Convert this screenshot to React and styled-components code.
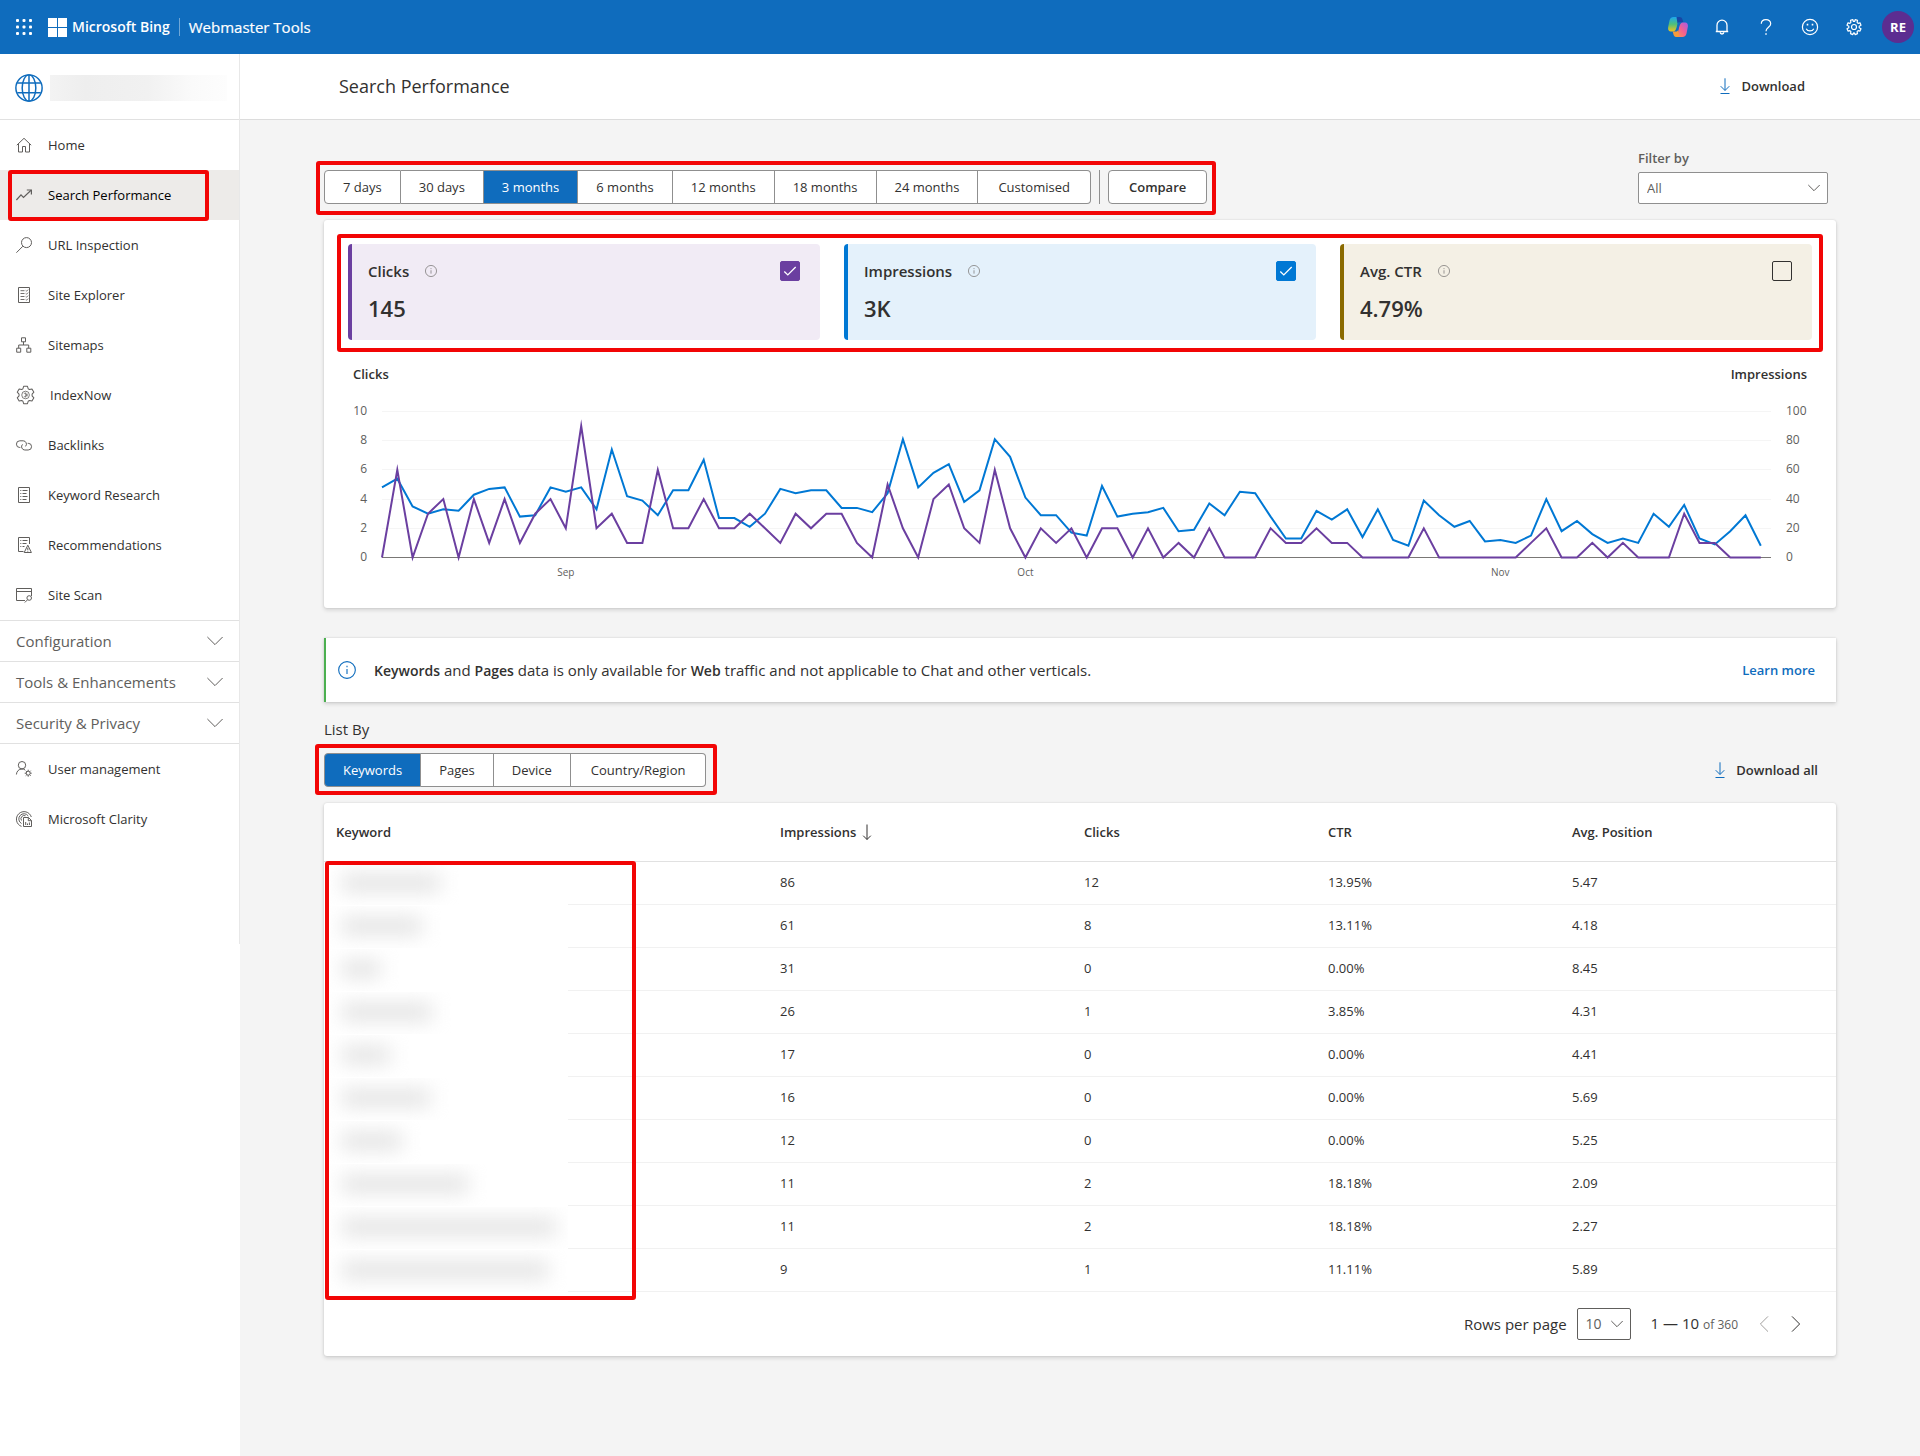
import React, { useState } from "react";
import styled, { createGlobalStyle, css } from "styled-components";

const color = {
  brand: "#0f6cbd",
  text: "#323130",
  muted: "#605e5c",
  line: "#e1e1e1",
  page: "#f4f4f4",
  border: "#8f8f8f",
  mark: "#f20505",
  clicks: "#6b3fa0",
  impressions: "#0078d4",
  ctr: "#8a6a00",
};

const GlobalStyle = createGlobalStyle`
  *, *::before, *::after { box-sizing: border-box; }
  body {
    margin: 0;
    background: ${color.page};
    color: ${color.text};
    font-family: "Open Sans", "Noto Sans", sans-serif;
    font-size: 13px;
    line-height: 20px;
  }
  button, select, input { font: inherit; color: inherit; margin: 0; }
  button { cursor: pointer; }
  a { color: inherit; text-decoration: none; }
  h1, h2, p { margin: 0; font-weight: 400; }
  svg { display: block; flex: none; }
`;

/* ---------- icons ---------- */

const Icon = styled.svg.attrs((p) => ({
  viewBox: p.viewBox || "0 0 16 16",
  fill: "none",
  stroke: "currentColor",
  "aria-hidden": true,
}))`
  width: ${(p) => p.$size || 16}px;
  height: ${(p) => p.$size || 16}px;
  overflow: visible;
`;

const icons = {
  home: (
    <path d="M.8 8.2 8 1.3l7.2 6.9M2.5 7v8H6.500V9.500h3V15h4V7" />
  ),
  trend: (
    <>
      <path strokeWidth="1.2" d="M.4 13 5 7.800l2.500 2.700L15 3.200" />
      <path strokeWidth="1.2" d="M10.800 3h4.600v4.400" />
    </>
  ),
  inspect: (
    <>
      <circle cx="10.500" cy="5.600" r="5" />
      <path d="M6.900 9.200.4 15.700" />
    </>
  ),
  explorer: (
    <>
      <path d="M2.500.5h11v15h-11z" />
      <path d="M4.500 3.700h4M4.500 6.500h4M4.500 9.500h4M4.500 12.500h4M9.700 3.400l.8.800 1.600-1.600M9.700 6.400l.8.800 1.600-1.600M9.700 9.400l.8.800 1.600-1.600M9.700 12.400l.8.800 1.600-1.600" strokeWidth=".9" />
    </>
  ),
  sitemap: (
    <path d="M5.500.8h4v4h-4zM.7 11.200h4v4h-4zM10.800 11.200h4v4h-4zM7.500 4.800V8M2.700 11.200V8h10v3.200" />
  ),
  indexnow: (
    <>
      <path d="M6.800.3h3.400l.7 2.200 1 .6 2.300-.5 1.700 2.900-1.600 1.700v1.600l1.600 1.700-1.700 2.900-2.300-.5-1 .6-.7 2.200H6.800l-.7-2.200-1-.6-2.300.5-1.700-2.900 1.600-1.700V7.200L1.100 5.500l1.700-2.900 2.300.5 1-.6z" strokeWidth=".9" strokeLinejoin="round" />
      <circle cx="8.500" cy="8" r="3.400" strokeWidth=".7" />
      <path d="M7 6.500h1.500c1.200 0 1.200 3 0 3H7M8.600 5.800v4.400M10 6.800v2.400" strokeWidth=".6" />
    </>
  ),
  link: (
    <>
      <path d="M4.300 10.500H3.800a3.300 3.300 0 0 1 0-6.700h3.400a3.300 3.300 0 0 1 2.300 5.600" />
      <path d="M11.700 6.300h.5a3.300 3.300 0 0 1 0 6.700H8.800a3.300 3.300 0 0 1-2.300-5.600" />
    </>
  ),
  keyword: (
    <>
      <path d="M2.500.5h11v15h-11z" />
      <path d="M4.300 3.500h1M4.300 6.500h1M4.300 9.500h1M4.300 12.500h1M6.500 3.500h5M6.500 6.500h4M6.500 9.500h5M6.500 12.500h4" />
    </>
  ),
  recommend: (
    <>
      <path d="M13.500 7V.5h-11v14h5" />
      <path d="M4.300 3.500h1M4.300 6.500h1M4.300 9.500h1M6.500 3.500h5M6.500 6.500h4M6.500 9.500h2M11.800 8.200l3.600 7.300H8.200zM11.800 10.800v2.200M11.800 13.700v.9" />
    </>
  ),
  scan: (
    <>
      <path d="M9 13.500H.5v-12h15V9M.5 4.500h15" />
      <circle cx="13.200" cy="11" r="2.300" />
      <path d="m11.500 12.800-2.700 2.700" />
    </>
  ),
  user: (
    <>
      <circle cx="6" cy="4.200" r="3.700" />
      <path d="M.4 13.500C.6 10.300 2.800 8 6 8c1.200 0 2.200.3 3 .9" />
      <circle cx="12.200" cy="12.200" r="2" />
      <path d="M12.200 8.700v1.500M12.200 14.200v1.500M8.700 12.200h1.500M14.200 12.200h1.500M9.700 9.700l1.100 1.100M13.600 13.600l1.100 1.100M14.700 9.700l-1.100 1.100M10.800 13.600l-1.100 1.100" />
    </>
  ),
  clarity: (
    <>
      <path d="M15.300 6A7.600 7.600 0 1 0 5.500 15.400" />
      <path d="M12.300 5A5.200 5.200 0 1 0 5.500 12.500M9.500 4.800A3.200 3.200 0 0 0 5.500 9.500" />
      <path d="M7.500 6.500h5l3 3v6h-8zM12.300 6.500v3.200h3.200M9.700 11v3M11.500 12.500V14M13.400 11.500V14" />
    </>
  ),
  download: <path d="M8 .3v12M3.700 8.200 8 12.500l4.300-4.300M3.500 15.500h9" />,
  info: (
    <>
      <circle cx="8" cy="8" r="7.400" />
      <path d="M8 7v4.500M8 4.200v1.300" />
    </>
  ),
  down: <path d="m.4 4 7.600 7.600L15.600 4" />,
  left: <path d="M12 .4 4.400 8l7.600 7.600" />,
  right: <path d="M4 .4 11.600 8 4 15.600" />,
  sort: <path d="M8 .5v15M4.200 11.700 8 15.500l3.800-3.800" />,
  check: <path d="m1.500 8.500 4 4 9-9" strokeWidth="1.500" />,
  bell: (
    <>
      <path d="M1.800 12.500h12.400M3 12.500V6.200a5 5 0 0 1 10 0v6.300" strokeWidth="1.300" />
      <path d="M6.200 13.200a1.800 1.800 0 0 0 3.600 0" strokeWidth="1.300" />
    </>
  ),
  help: (
    <>
      <path d="M3.300 4.700C3.300 2.300 5.200.6 8 .6s4.700 1.700 4.700 4.100c0 3.300-4.700 3.800-4.700 7.500" strokeWidth="1.200" />
      <path d="M8 14.300v1.500" strokeWidth="1.500" />
    </>
  ),
  smile: (
    <>
      <circle cx="8" cy="8" r="7.600" strokeWidth="1.200" />
      <path d="M4.200 9.700c1.500 2.900 6.100 2.900 7.600 0" strokeWidth="1.200" />
      <path d="M4.700 5.700h1.600M9.700 5.700h1.600" strokeWidth="1.700" />
    </>
  ),
  gear: (
    <>
      <path d="m6.800.5.5 1.900h1.400L9.200.5l2.300.9-.4 1.900 1 1 1.900-.5 1 2.400-1.800 1v1.500l1.800 1-1 2.400-1.900-.4-1 1 .4 1.900-2.300 1-1-1.800H7.700l-.9 1.800-2.300-1 .4-1.900-1-1-1.900.4-1-2.400 1.800-1V7.200l-1.800-1 1-2.400 1.900.5 1-1-.4-1.900z" strokeWidth="1.200" strokeLinejoin="round" />
      <circle cx="8" cy="8" r="2.500" strokeWidth="1.200" />
    </>
  ),
  globe: (
    <g strokeWidth=".85">
      <circle cx="8" cy="8" r="7.500" />
      <ellipse cx="8" cy="8" rx="3.900" ry="7.500" />
      <path d="M8 .5v15M1.300 5.200h13.400M1.300 10.700h13.400" />
    </g>
  ),
};

const Glyph = ({ name, size }) => <Icon $size={size}>{icons[name]}</Icon>;

const Waffle = () => (
  <svg width="16" height="16" viewBox="0 0 16 16" fill="#fff" aria-hidden="true">
    {[0, 6.500, 13].flatMap((y) =>
      [0, 6.500, 13].map((x) => <rect key={`${x}-${y}`} x={x} y={y} width="3" height="3" rx="1" />)
    )}
  </svg>
);

const WindowsLogo = () => (
  <svg width="19" height="19" viewBox="0 0 19 19" fill="#fff" aria-hidden="true">
    <path d="M0 0h9v9H0zM10 0h9v9h-9zM0 10h9v9H0zM10 10h9v9h-9z" />
  </svg>
);

const CopilotLogo = () => (
  <svg width="20" height="20" viewBox="0 0 20 20" aria-hidden="true">
    <defs>
      <linearGradient id="cpA" x1="0" y1="0" x2="0" y2="1">
        <stop offset="0" stopColor="#1ba6f0" />
        <stop offset=".5" stopColor="#4fc07a" />
        <stop offset="1" stopColor="#f2c21a" />
      </linearGradient>
      <linearGradient id="cpB" x1="1" y1="0" x2="0" y2="1">
        <stop offset="0" stopColor="#a35bea" />
        <stop offset=".5" stopColor="#f4608e" />
        <stop offset="1" stopColor="#ff9a4d" />
      </linearGradient>
    </defs>
    <path d="M5.500 0H13c-2.300.5-2.700 3-3.300 5.500-.9 3.500-1.200 9-4.500 9H2.800C.5 14.500-.3 12.500.2 10l1.300-6.500C2 1.200 3.300 0 5.500 0z" fill="url(#cpA)" />
    <path d="M8.500 0h3.300c1.700 0 2.200 1 2.700 2.500l.8 2.700h-4.200c-.8 0-1.300.5-1.600 1.300z" fill="#1747a6" />
    <path d="M14.500 20H7c2.300-.5 2.700-3 3.300-5.500.9-3.500 1.200-9 4.500-9h2.400c2.300 0 3.100 2 2.600 4.500l-1.300 6.500c-.5 2.300-1.800 3.500-4 3.500z" fill="url(#cpB)" />
    <path d="M11.500 20H8.200c-1.700 0-2.200-1-2.700-2.500l-.8-3h3.200c1.400 0 1.900-.6 2.300-1.500z" fill="#f59a3c" />
  </svg>
);

/* ---------- red marker frame laid over a group ---------- */

const Marked = styled.div`
  position: relative;
  display: flex;
  align-items: center;
  gap: ${(p) => p.$gap || 0}px;
  &::after {
    content: "";
    position: absolute;
    inset: ${(p) => p.$inset};
    border: 4px solid ${color.mark};
    border-radius: 3px;
    pointer-events: none;
  }
`;

/* ---------- top bar ---------- */

const TopBar = styled.header`
  display: flex;
  align-items: center;
  justify-content: space-between;
  height: 54px;
  padding-left: 16px;
  background: ${color.brand};
  color: #fff;
`;
const Brand = styled.div`
  display: flex;
  align-items: center;
  font-weight: 500;
  font-size: 15px;
`;
const BarButton = styled.button`
  display: grid;
  place-items: center;
  width: ${(p) => p.$width || 44}px;
  height: 44px;
  padding: 0;
  border: 0;
  background: none;
`;
const Product = styled.a`
  display: flex;
  align-items: center;
  gap: 5px;
  margin-left: 16px;
  font-size: 14px;
  font-weight: 600;
`;
const Service = styled.a`
  margin-left: 9px;
  padding-left: 9px;
  border-left: 1px solid #6fa7d7;
  line-height: 18px;
  -webkit-text-stroke: 0.2px currentColor;
`;
const Tools = styled.div`
  display: flex;
  align-items: center;
`;
const Avatar = styled.span`
  display: grid;
  place-items: center;
  width: 32px;
  height: 32px;
  border-radius: 50%;
  background: #5c2d91;
  font-size: 13px;
  font-weight: 700;
`;

/* ---------- shell ---------- */

const Shell = styled.div`
  display: flex;
  min-height: calc(100vh - 54px);
`;
const Sidebar = styled.aside`
  flex: none;
  width: 240px;
  background: #fff;
`;
const SideInner = styled.div`
  padding-bottom: 100px;
  border-right: 1px solid #e8e8e8;
`;
const Site = styled.div`
  display: flex;
  align-items: center;
  gap: 7px;
  height: 66px;
  padding: 2px 12px 0 15px;
  border-bottom: 1px solid ${color.line};
  color: ${color.brand};
`;
const SiteName = styled.div`
  flex: 1;
  height: 26px;
  background: linear-gradient(90deg, #f3f3f3, #eeeeee 20%, #f1f1f1 55%, #fafafa 80%, #fdfdfd);
`;
const NavItem = styled.a`
  position: relative;
  display: flex;
  align-items: center;
  gap: 16px;
  height: 50px;
  padding-left: 16px;
  color: ${color.text};
  svg { color: ${color.muted}; }
  ${(p) =>
    p.$active &&
    css`
      background: #edebe9;
      color: #000;
      &::after {
        content: "";
        position: absolute;
        inset: 0 30px -1px 8px;
        border: 4px solid ${color.mark};
        border-radius: 3px;
      }
    `}
`;
const Groups = styled.div`
  border-bottom: 1px solid ${color.line};
`;
const Group = styled.button`
  display: flex;
  align-items: center;
  justify-content: space-between;
  width: 100%;
  height: 41px;
  padding: 0 16px;
  border: 0;
  border-top: 1px solid ${color.line};
  background: none;
  color: ${color.muted};
  font-size: 15px;
`;

const Main = styled.main`
  flex: 1;
  min-width: 0;
`;
const PageHead = styled.div`
  display: flex;
  align-items: center;
  justify-content: space-between;
  height: 66px;
  padding: 0 115px 2px 99px;
  border-bottom: 1px solid #dcdcdc;
  background: #fff;
`;
const Title = styled.h1`
  font-size: 18px;
  line-height: 24px;
`;
const TextButton = styled.button`
  display: flex;
  align-items: center;
  gap: 8px;
  padding: 0;
  border: 0;
  background: none;
  font-weight: 600;
  svg { color: ${color.brand}; }
`;
const Content = styled.div`
  padding: 28px 84px 100px;
`;
const Row = styled.div`
  display: flex;
  align-items: ${(p) => p.$align || "flex-end"};
  justify-content: space-between;
  padding-right: ${(p) => p.$end || 0}px;
  margin-bottom: 16px;
`;

/* ---------- segmented buttons ---------- */

const Segments = styled.div`
  display: flex;
`;
const Segment = styled.button`
  height: 34px;
  padding: 0 ${(p) => (p.$last ? 20 : 18)}px;
  border: 1px solid ${color.border};
  border-left-width: ${(p) => (p.$first ? 1 : 0)}px;
  border-radius: ${(p) => (p.$first ? "4px 0 0 4px" : p.$last ? "0 4px 4px 0" : 0)};
  background: ${(p) => (p.$on ? color.brand : "#fff")};
  color: ${(p) => (p.$on ? "#fff" : color.text)};
  white-space: nowrap;
`;
const Rule = styled.span`
  width: 1px;
  height: 34px;
  background: ${color.border};
`;
const Compare = styled.button`
  height: 34px;
  padding: 0 20px;
  border: 1px solid ${color.border};
  border-radius: 4px;
  background: #fff;
  font-weight: 600;
`;

function SegmentGroup({ options, value, onChange, label }) {
  return (
    <Segments role="group" aria-label={label}>
      {options.map((o, i) => (
        <Segment
          key={o}
          type="button"
          $first={i === 0}
          $last={i === options.length - 1}
          $on={o === value}
          aria-pressed={o === value}
          onClick={() => onChange(o)}
        >
          {o}
        </Segment>
      ))}
    </Segments>
  );
}

/* ---------- select ---------- */

const Filter = styled.div`
  display: flex;
  flex-direction: column;
  gap: 4px;
  width: 190px;
`;
const FilterLabel = styled.label`
  color: ${color.muted};
  font-weight: 600;
`;
const SelectBox = styled.div`
  display: grid;
  align-items: center;
  width: ${(p) => p.$width};
  color: ${color.muted};
  > * { grid-area: 1 / 1; }
  svg {
    justify-self: end;
    margin-right: 8px;
    pointer-events: none;
  }
  path { vector-effect: non-scaling-stroke; }
`;
const Select = styled.select`
  appearance: none;
  width: 100%;
  height: 32px;
  padding: 0 8px;
  border: 1px solid ${(p) => (p.$strong ? color.muted : color.border)};
  border-radius: 2px;
  background: #fff;
`;

/* ---------- cards ---------- */

const Card = styled.section`
  border-radius: 3px;
  background: #fff;
  box-shadow: 0 2px 4px rgba(0, 0, 0, 0.14), 0 0 2px rgba(0, 0, 0, 0.13);
`;
const ChartCard = styled(Card)`
  padding: 24px;
`;
const Metric = styled.div`
  display: flex;
  flex: 1;
  justify-content: space-between;
  height: 96px;
  padding: 15px 20px 15px 16px;
  border-left: 4px solid ${(p) => p.$accent};
  border-radius: 4px;
  background: ${(p) => p.$tint};
`;
const MetricName = styled.label`
  display: flex;
  align-items: center;
  gap: 16px;
  font-size: 15px;
  line-height: 24px;
  font-weight: 600;
  svg { color: #797775; }
`;
const MetricValue = styled.p`
  margin-top: 9px;
  font-size: 22px;
  line-height: 32px;
  font-weight: 600;
`;
const CheckBox = styled.span`
  display: grid;
  place-items: center;
  height: 20px;
  margin-top: 2px;
  color: #fff;
  > * { grid-area: 1 / 1; }
  svg { pointer-events: none; }
`;
const CheckInput = styled.input`
  appearance: none;
  width: 20px;
  height: 20px;
  border: 1px solid ${color.text};
  border-radius: 2px;
  &:checked {
    border-color: ${(p) => p.$accent};
    background: ${(p) => p.$accent};
  }
`;
const AxisTitles = styled.div`
  display: flex;
  justify-content: space-between;
  margin: 24px 5px 6px;
  font-weight: 600;
`;
const Plot = styled.svg`
  width: 100%;
  height: auto;
  font-size: 12px;
  text { fill: ${color.muted}; }
`;

const clicks = [
  0, 6, 0, 3, 4, 0, 4, 1, 4, 1, 3, 4, 2, 9, 2, 3, 1, 1, 6, 2, 2, 4, 2, 2, 3, 2, 1, 3, 2, 3, 3, 1, 0, 5, 2, 0, 4, 5, 2, 1,
  6, 2, 0, 2, 1, 2, 0, 2, 2, 0, 2, 0, 1, 0, 2, 0, 0, 0, 2, 1, 1, 2, 1, 1, 0, 0, 0, 0, 2, 0, 0, 0, 0, 0, 0, 1, 2, 0, 0, 1,
  0, 1, 0, 0, 0, 3, 1, 1, 0, 0, 0,
];
const impressions = [
  48, 54, 35, 30, 33, 32, 43, 47, 48, 28, 29, 48, 45, 48, 33, 74, 42, 39, 29, 46, 46, 67, 27, 27, 21, 30, 47, 44, 46, 46,
  34, 34, 31, 44, 81, 48, 58, 64, 38, 46, 81, 69, 41, 29, 29, 17, 15, 49, 28, 30, 31, 34, 18, 19, 37, 29, 45, 44, 28, 13,
  13, 32, 26, 33, 14, 33, 12, 8, 39, 29, 21, 25, 11, 12, 10, 15, 40, 18, 25, 16, 10, 13, 10, 30, 21, 36, 13, 9, 18, 29, 8,
];
const plot = { left: 34, right: 1423, top: 21.500, base: 167.500, step: 15.320 };
const px = (i) => plot.left + i * plot.step;
const py = (ratio) => plot.base - ratio * (plot.base - plot.top);
const trace = (values, max) => values.map((v, i) => `${px(i).toFixed(1)},${py(v / max).toFixed(1)}`).join(" ");

function Chart({ shown }) {
  return (
    <Plot viewBox="0 0 1464 194" role="img" aria-label="Clicks and impressions over the last 3 months">
      {[0, 2, 4, 6, 8, 10].map((t) => (
        <g key={t}>
          {t > 0 && <path d={`M${plot.left} ${Math.floor(py(t / 10)) + 0.5}H${plot.right}`} stroke="#f5f5f5" />}
          <text x="19" y={py(t / 10) + 3.500} textAnchor="end">{t}</text>
          <text x="1438" y={py(t / 10) + 3.500}>{t * 10}</text>
        </g>
      ))}
      {[["Sep", 12], ["Oct", 42], ["Nov", 73]].map(([m, i]) => (
        <text key={m} x={px(i)} y="186" textAnchor="middle" fontSize="10">{m}</text>
      ))}
      <path d={`M${plot.left} ${plot.base}H${plot.right}`} stroke="#797775" />
      {shown.Impressions && (
        <polyline points={trace(impressions, 100)} fill="none" stroke={color.impressions} strokeWidth="2" strokeMiterlimit="20" />
      )}
      {shown.Clicks && (
        <polyline points={trace(clicks, 10)} fill="none" stroke={color.clicks} strokeWidth="2" strokeMiterlimit="20" />
      )}
    </Plot>
  );
}

/* ---------- notice ---------- */

const Notice = styled.div`
  display: flex;
  align-items: center;
  height: 64px;
  margin: 30px 0 17px;
  padding: 0 21px 0 12px;
  border-left: 2px solid #4caf50;
  background: #fff;
  box-shadow: 0 2px 4px rgba(0, 0, 0, 0.14), 0 0 2px rgba(0, 0, 0, 0.13);
  > svg { color: ${color.brand}; }
`;
const NoticeText = styled.p`
  flex: 1;
  margin-left: 18px;
  font-size: 15px;
  strong { font-size: 14px; font-weight: 600; }
`;
const Learn = styled.a`
  color: ${color.brand};
  font-weight: 600;
`;
const ListBy = styled.h2`
  margin-bottom: 14px;
  font-size: 15px;
  line-height: 20px;
`;

/* ---------- table ---------- */

const TableFrame = styled.div`
  position: relative;
  &::after {
    content: "";
    position: absolute;
    inset: 58px auto -8px 1px;
    width: 311px;
    border: 4px solid ${color.mark};
    border-radius: 3px;
    pointer-events: none;
  }
`;
const Table = styled.table`
  width: 100%;
  table-layout: fixed;
  border-collapse: separate;
  border-spacing: 0;
`;
const Col = styled.col`
  width: ${(p) => p.$width};
`;
const Th = styled.th`
  height: 59px;
  padding: 0 12px;
  border-bottom: 1px solid ${color.line};
  text-align: left;
  font-weight: 600;
`;
const SortLabel = styled.span`
  display: flex;
  align-items: center;
  gap: 3px;
`;
const Td = styled.td`
  height: 43px;
  padding: 0 12px 2px;
  border-bottom: 1px solid #f1f1f1;
`;
const HiddenCell = styled.td`
  height: 43px;
  padding: 0 6px;
  background: linear-gradient(90deg, #fff 244px, #f1f1f1 244px) bottom / 100% 1px no-repeat;
`;
const HiddenClip = styled.div`
  display: flex;
  align-items: center;
  width: 238px;
  height: 42px;
  padding-bottom: 2px;
  overflow: hidden;
`;
const HiddenText = styled.div`
  width: ${(p) => p.$width}px;
  height: 16px;
  margin-left: 12px;
  background: #e0e0e0;
  filter: blur(10px);
`;
const Pager = styled.div`
  display: flex;
  align-items: center;
  justify-content: flex-end;
  height: 64px;
  padding-right: 32px;
  font-size: 15px;
`;
const PagerLabel = styled.label`
  margin-right: 10px;
`;
const PagerSelect = styled(Select)`
  font-size: 14px;
`;
const Range = styled.span`
  margin: 0 18px 0 20px;
  small { font-size: 12px; color: ${color.muted}; }
`;
const PageButton = styled.button`
  display: grid;
  place-items: center;
  width: 16px;
  height: 32px;
  margin-left: ${(p) => (p.$next ? 16 : 0)}px;
  padding: 0;
  border: 0;
  background: none;
  color: ${(p) => (p.disabled ? "#a19f9d" : color.text)};
`;

const nav = [
  ["Home", "home"],
  ["Search Performance", "trend"],
  ["URL Inspection", "inspect"],
  ["Site Explorer", "explorer"],
  ["Sitemaps", "sitemap"],
  ["IndexNow", "indexnow", 18],
  ["Backlinks", "link"],
  ["Keyword Research", "keyword"],
  ["Recommendations", "recommend"],
  ["Site Scan", "scan"],
];
const lowerNav = [
  ["User management", "user"],
  ["Microsoft Clarity", "clarity"],
];
const groups = ["Configuration", "Tools & Enhancements", "Security & Privacy"];
const periods = ["7 days", "30 days", "3 months", "6 months", "12 months", "18 months", "24 months", "Customised"];
const lists = ["Keywords", "Pages", "Device", "Country/Region"];
const metrics = [
  { name: "Clicks", value: "145", accent: color.clicks, tint: "#f1ebf5" },
  { name: "Impressions", value: "3K", accent: color.impressions, tint: "#e4f1fb" },
  { name: "Avg. CTR", value: "4.79%", accent: color.ctr, tint: "#f4f0e5" },
];
const rows = [
  [98, "86", "12", "13.95%", "5.47"],
  [80, "61", "8", "13.11%", "4.18"],
  [38, "31", "0", "0.00%", "8.45"],
  [90, "26", "1", "3.85%", "4.31"],
  [48, "17", "0", "0.00%", "4.41"],
  [88, "16", "0", "0.00%", "5.69"],
  [60, "12", "0", "0.00%", "5.25"],
  [126, "11", "2", "18.18%", "2.09"],
  [214, "11", "2", "18.18%", "2.27"],
  [206, "9", "1", "11.11%", "5.89"],
];

export default function App() {
  const [period, setPeriod] = useState("3 months");
  const [list, setList] = useState("Keywords");
  const [shown, setShown] = useState({ Clicks: true, Impressions: true, "Avg. CTR": false });

  return (
    <>
      <GlobalStyle />
      <TopBar>
        <Brand>
          <BarButton type="button" $width={16} aria-label="App launcher"><Waffle /></BarButton>
          <Product href="#bing"><WindowsLogo />Microsoft Bing</Product>
          <Service href="#home">Webmaster Tools</Service>
        </Brand>
        <Tools>
          <BarButton type="button" aria-label="Copilot"><CopilotLogo /></BarButton>
          <BarButton type="button" aria-label="Notifications"><Glyph name="bell" /></BarButton>
          <BarButton type="button" aria-label="Help"><Glyph name="help" /></BarButton>
          <BarButton type="button" aria-label="Feedback"><Glyph name="smile" /></BarButton>
          <BarButton type="button" aria-label="Settings"><Glyph name="gear" /></BarButton>
          <BarButton type="button" aria-label="Account"><Avatar>RE</Avatar></BarButton>
        </Tools>
      </TopBar>
      <Shell>
        <Sidebar>
          <SideInner>
            <Site><Glyph name="globe" size={28} /><SiteName /></Site>
            <nav>
              {nav.map(([label, icon, size]) => (
                <NavItem key={label} href="#nav" $active={label === "Search Performance"}>
                  <Glyph name={icon} size={size} />{label}
                </NavItem>
              ))}
              <Groups>
                {groups.map((g) => (
                  <Group key={g} type="button" aria-expanded="false">{g}<Glyph name="down" /></Group>
                ))}
              </Groups>
              {lowerNav.map(([label, icon]) => (
                <NavItem key={label} href="#nav"><Glyph name={icon} />{label}</NavItem>
              ))}
            </nav>
          </SideInner>
        </Sidebar>
        <Main>
          <PageHead>
            <Title>Search Performance</Title>
            <TextButton type="button"><Glyph name="download" />Download</TextButton>
          </PageHead>
          <Content>
            <Row $end={8}>
              <Marked $gap={8} $inset="-9px -9px -11px -8px">
                <SegmentGroup label="Period" options={periods} value={period} onChange={setPeriod} />
                <Rule />
                <Compare type="button">Compare</Compare>
              </Marked>
              <Filter>
                <FilterLabel htmlFor="filter">Filter by</FilterLabel>
                <SelectBox $width="100%">
                  <Select id="filter"><option>All</option></Select>
                  <Glyph name="down" size={12} />
                </SelectBox>
              </Filter>
            </Row>

            <ChartCard>
              <Marked $gap={24} $inset="-10px -11px -12px -11px">
                {metrics.map((m) => (
                  <Metric key={m.name} $accent={m.accent} $tint={m.tint}>
                    <div>
                      <MetricName htmlFor={m.name}>{m.name}<Glyph name="info" size={12} /></MetricName>
                      <MetricValue>{m.value}</MetricValue>
                    </div>
                    <CheckBox>
                      <CheckInput
                        id={m.name}
                        type="checkbox"
                        $accent={m.accent}
                        checked={shown[m.name]}
                        onChange={(e) => setShown({ ...shown, [m.name]: e.target.checked })}
                      />
                      {shown[m.name] && <Glyph name="check" size={14} />}
                    </CheckBox>
                  </Metric>
                ))}
              </Marked>
              <AxisTitles><span>Clicks</span><span>Impressions</span></AxisTitles>
              <Chart shown={shown} />
            </ChartCard>

            <Notice>
              <Glyph name="info" size={18} />
              <NoticeText>
                <strong>Keywords</strong> and <strong>Pages</strong> data is only available for <strong>Web</strong> traffic
                and not applicable to Chat and other verticals.
              </NoticeText>
              <Learn href="#learn">Learn more</Learn>
            </Notice>

            <ListBy>List By</ListBy>
            <Row $end={18} $align="center">
              <Marked $inset="-9px -11px -8px -9px">
                <SegmentGroup label="List by" options={lists} value={list} onChange={setList} />
              </Marked>
              <TextButton type="button"><Glyph name="download" />Download all</TextButton>
            </Row>

            <Card>
              <TableFrame>
                <Table>
                  <colgroup>
                    <Col $width="444px" />
                    <Col $width="304px" />
                    <Col $width="244px" />
                    <Col $width="244px" />
                    <Col $width="auto" />
                  </colgroup>
                  <thead>
                    <tr>
                      <Th>Keyword</Th>
                      <Th><SortLabel>Impressions<Glyph name="sort" /></SortLabel></Th>
                      <Th>Clicks</Th>
                      <Th>CTR</Th>
                      <Th>Avg. Position</Th>
                    </tr>
                  </thead>
                  <tbody>
                    {rows.map(([width, ...cells], r) => (
                      <tr key={r}>
                        <HiddenCell><HiddenClip><HiddenText $width={width} /></HiddenClip></HiddenCell>
                        {cells.map((c, i) => <Td key={i}>{c}</Td>)}
                      </tr>
                    ))}
                  </tbody>
                </Table>
              </TableFrame>
              <Pager>
                <PagerLabel htmlFor="per-page">Rows per page</PagerLabel>
                <SelectBox $width="54px">
                  <PagerSelect id="per-page" $strong><option>10</option></PagerSelect>
                  <Glyph name="down" size={12} />
                </SelectBox>
                <Range>1 — 10 <small>of 360</small></Range>
                <PageButton type="button" disabled aria-label="Previous page"><Glyph name="left" /></PageButton>
                <PageButton type="button" $next aria-label="Next page"><Glyph name="right" /></PageButton>
              </Pager>
            </Card>
          </Content>
        </Main>
      </Shell>
    </>
  );
}
